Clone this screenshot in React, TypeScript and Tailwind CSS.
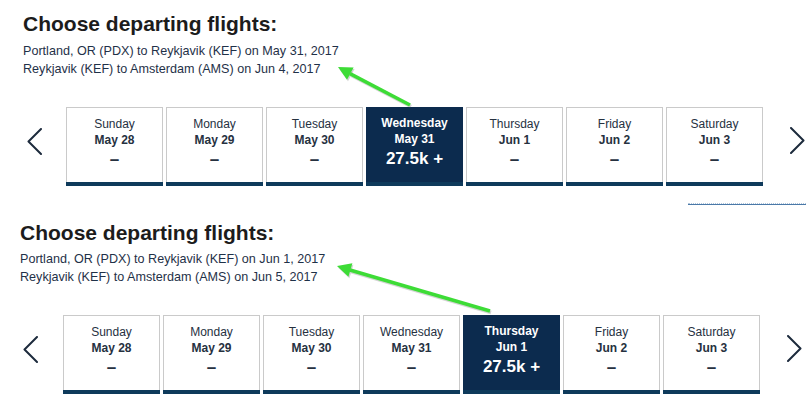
import React from "react";

type Day = { day: string; date: string; price?: string };

const Chevron = ({ dir }: { dir: "left" | "right" }) => (
  <svg width="15" height="27" viewBox="0 0 15 27" fill="none">
    <polyline
      points={dir === "left" ? "14,1 1.5,13.5 14,26" : "1,1 13.5,13.5 1,26"}
      stroke="#1d2b3d"
      strokeWidth="2"
      strokeLinecap="round"
      strokeLinejoin="round"
    />
  </svg>
);

const Card = ({ d }: { d: Day }) => {
  const sel = !!d.price;
  return (
    <div className={`w-[97px] h-[79px] flex flex-col ${sel ? "bg-[#0c2b4e]" : "bg-white"}`}>
      <div
        className={`flex-1 flex flex-col items-center pt-[8px] ${
          sel ? "" : "border-x border-t border-[#cacaca]"
        }`}
      >
        <div
          className={`text-[12px] leading-[16px] ${
            sel ? "text-white font-bold text-[11.5px]" : "text-[#26313f]"
          }`}
        >
          {d.day}
        </div>
        <div
          className={`text-[12px] leading-[16px] font-bold ${sel ? "text-white" : "text-[#26313f]"}`}
        >
          {d.date}
        </div>
        <div
          className={`mt-[2px] text-[17px] leading-[20px] font-bold ${
            sel ? "text-white" : "text-[#26313f]"
          }`}
        >
          {sel ? d.price : "–"}
        </div>
      </div>
      <div className="h-[4px] bg-[#0e3a5b]" />
    </div>
  );
};

const Section = ({
  lines,
  days,
  pl,
  arrowPl,
  subMt,
}: {
  lines: string[];
  days: Day[];
  pl: string;
  arrowPl: string;
  subMt: string;
}) => (
  <div className={pl}>
    <div className="text-[21px] leading-[24px] font-bold text-[#1c1c1c]">
      Choose departing flights:
    </div>
    <div className={`${subMt} text-[12.6px] leading-[18px] text-[#1f3148]`}>
      {lines.map((l) => (
        <div key={l}>{l}</div>
      ))}
    </div>
    <div className="mt-[29px] flex items-start">
      <div className={`w-[43px] pt-[21px] ${arrowPl}`}>
        <Chevron dir="left" />
      </div>
      <div className="flex gap-[3px]">
        {days.map((d) => (
          <Card key={d.day} d={d} />
        ))}
      </div>
      <div className="ml-[27px] pt-[20px]">
        <Chevron dir="right" />
      </div>
    </div>
  </div>
);

export default function App() {
  const days1: Day[] = [
    { day: "Sunday", date: "May 28" },
    { day: "Monday", date: "May 29" },
    { day: "Tuesday", date: "May 30" },
    { day: "Wednesday", date: "May 31", price: "27.5k +" },
    { day: "Thursday", date: "Jun 1" },
    { day: "Friday", date: "Jun 2" },
    { day: "Saturday", date: "Jun 3" },
  ];
  const days2: Day[] = [
    { day: "Sunday", date: "May 28" },
    { day: "Monday", date: "May 29" },
    { day: "Tuesday", date: "May 30" },
    { day: "Wednesday", date: "May 31" },
    { day: "Thursday", date: "Jun 1", price: "27.5k +" },
    { day: "Friday", date: "Jun 2" },
    { day: "Saturday", date: "Jun 3" },
  ];
  return (
    <div className="relative w-[812px] h-[409px] overflow-hidden bg-white font-['Liberation_Sans',Arial,sans-serif]">
      <div className="pt-[12px]">
        <Section
          pl="pl-[23px]"
          arrowPl="pl-[4px]"
          subMt="mt-[6px]"
          lines={[
            "Portland, OR (PDX) to Reykjavik (KEF) on May 31, 2017",
            "Reykjavik (KEF) to Amsterdam (AMS) on Jun 4, 2017",
          ]}
          days={days1}
        />
        <div className="mt-[17px] flex justify-end pr-[6px]">
          <div className="w-[118px] flex flex-col">
            <div className="h-[1px] border-t border-dotted border-[#b3c7dc]" />
            <div className="h-[1px] bg-[#4a79a8]" />
          </div>
        </div>
        <div className="mt-[16px]">
          <Section
            pl="pl-[20px]"
            arrowPl="pl-[3px]"
            subMt="mt-[5px]"
            lines={[
              "Portland, OR (PDX) to Reykjavik (KEF) on Jun 1, 2017",
              "Reykjavik (KEF) to Amsterdam (AMS) on Jun 5, 2017",
            ]}
            days={days2}
          />
        </div>
      </div>
      <svg
        className="absolute inset-0 pointer-events-none"
        width="812"
        height="409"
        viewBox="0 0 812 409"
      >
        <g opacity="0.25" transform="translate(1,1.5)">
          <line x1="410" y1="105" x2="350" y2="73.6" stroke="#555" strokeWidth="3.5" />
          <polygon points="338,67 353.6,67.4 347,79.8" fill="#555" />
          <line x1="490" y1="311" x2="350" y2="270" stroke="#555" strokeWidth="3.5" />
          <polygon points="337,266 352.4,263.3 348.4,276.7" fill="#555" />
        </g>
        <line x1="410" y1="105" x2="350" y2="73.6" stroke="#3ddc36" strokeWidth="3.5" />
        <polygon points="338,67 353.6,67.4 347,79.8" fill="#3ddc36" />
        <line x1="490" y1="311" x2="350" y2="270" stroke="#3ddc36" strokeWidth="3.5" />
        <polygon points="337,266 352.4,263.3 348.4,276.7" fill="#3ddc36" />
      </svg>
    </div>
  );
}
